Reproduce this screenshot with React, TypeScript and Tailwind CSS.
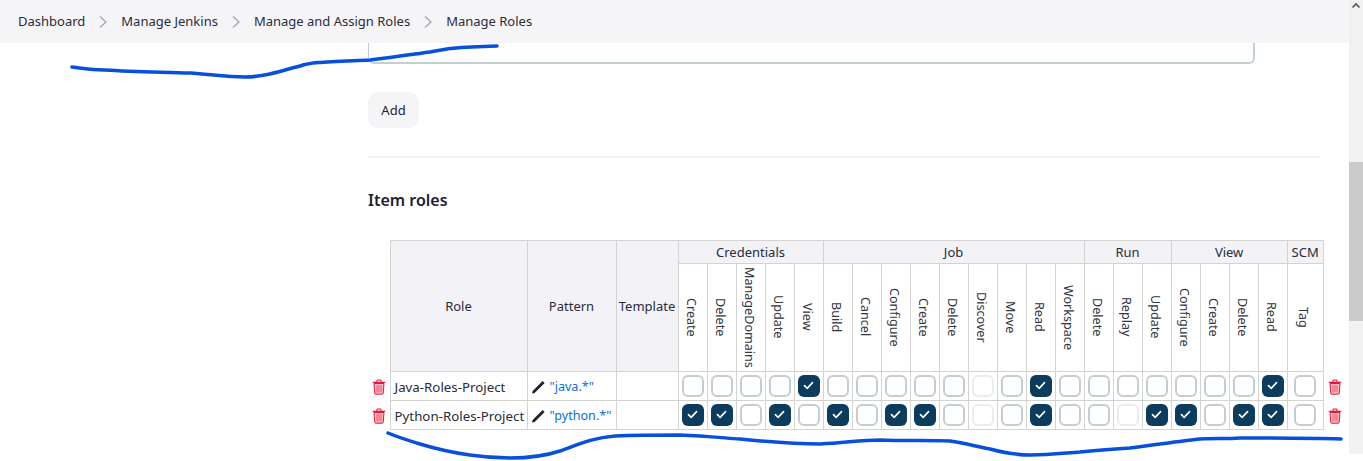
const crumbs = ["Dashboard", "Manage Jenkins", "Manage and Assign Roles", "Manage Roles"];

const groups = [
  { name: "Credentials", perms: ["Create", "Delete", "ManageDomains", "Update", "View"] },
  { name: "Job", perms: ["Build", "Cancel", "Configure", "Create", "Delete", "Discover", "Move", "Read", "Workspace"] },
  { name: "Run", perms: ["Delete", "Replay", "Update"] },
  { name: "View", perms: ["Configure", "Create", "Delete", "Read"] },
  { name: "SCM", perms: ["Tag"] },
];

const permCount = 22;

const roles = [
  { name: "Java-Roles-Project", pattern: '"java.*"', checked: [4, 12, 20], disabled: [10] },
  { name: "Python-Roles-Project", pattern: '"python.*"', checked: [0, 1, 3, 5, 7, 8, 12, 16, 17, 19, 20], disabled: [10, 15] },
];

const cell = "border border-[#d3d3cf] p-0 font-normal";

function Trash() {
  return (
    <svg width="14" height="16" viewBox="0 0 14 16" className="mx-auto block">
      <path d="M2 4.5h10l-.8 10a.8.8 0 0 1-.8.7H3.6a.8.8 0 0 1-.8-.7z" fill="#f9b9c2" stroke="#e6173c" strokeWidth="1" />
      <path d="M.8 3.4h12.4M5 3.2V1.5c0-.3.2-.5.5-.5h3c.3 0 .5.2.5.5v1.7" fill="none" stroke="#e6173c" strokeWidth="1.1" />
      <path d="M5 6.2v7M7 6.2v7M9 6.2v7" fill="none" stroke="#ea3a58" strokeWidth="0.8" />
    </svg>
  );
}

function Pencil() {
  return (
    <svg width="15" height="14" viewBox="0 0 15 14" className="shrink-0">
      <path d="M1 13.4 1.6 11 11.6 1l2 2-10 10z" fill="#1f2230" />
    </svg>
  );
}

function Box({ checked, disabled }: { checked: boolean; disabled: boolean }) {
  if (checked) {
    return (
      <div className="mx-auto flex h-[22px] w-[22px] items-center justify-center rounded-[6px] bg-[#0b3c5d]">
        <svg width="11" height="9" viewBox="0 0 12 10">
          <path d="M1.5 5.2 4.5 8.2 10.5 1.8" stroke="#fff" strokeWidth="1.8" fill="none" strokeLinecap="round" strokeLinejoin="round" />
        </svg>
      </div>
    );
  }
  return (
    <div
      className={`mx-auto h-[22px] w-[22px] rounded-[6px] border-2 ${
        disabled ? "border-[#e9edef]" : "border-[#c3ced2]"
      }`}
    />
  );
}

export default function App() {
  return (
    <div className="relative flex h-[461px] overflow-hidden bg-white font-['Noto_Sans',sans-serif] text-[13px] text-[#1f2230]">
      <div className="min-w-0 flex-1">
        {/* Breadcrumb bar */}
        <div className="flex h-[43px] items-center bg-[#f5f5f8] pl-[18px] text-[#2a2c38]">
          {crumbs.map((c, i) => (
            <div key={c} className="flex items-center">
              {i > 0 && (
                <svg width="36" height="14" viewBox="0 0 36 14">
                  <path d="M15 1.5 21 7 15 12.5" stroke="#a5a5ad" strokeWidth="1.3" fill="none" />
                </svg>
              )}
              <span>{c}</span>
            </div>
          ))}
        </div>

        <div className="pl-[368px] pr-[28px]">
          {/* Bottom of the global roles card */}
          <div className="mr-[66px] h-[21px] rounded-b-[6px] border-2 border-t-0 border-l-[1px] border-[#c3ced2]" />

          <button className="mt-[28px] block h-[36px] w-[51px] rounded-[10px] bg-[#f5f5f8] pt-[2px] text-[13px]">Add</button>

          <div className="mt-[28px] h-[2px] bg-[#f3f3f8]" />

          <h2 className="mt-[30px] h-[25px] text-[16px] leading-[25px] font-semibold">Item roles</h2>

          <table className="mt-[27px] w-[977px] table-fixed border-collapse text-center text-[#2a2c38]">
            <colgroup>
              <col className="w-[22px]" />
              <col className="w-[137px]" />
              <col className="w-[89px]" />
              <col className="w-[62px]" />
              {Array.from({ length: permCount - 1 }, (_, i) => (
                <col key={i} className="w-[29px]" />
              ))}
              <col className="w-[36px]" />
              <col className="w-[22px]" />
            </colgroup>
            <thead>
              <tr className="h-[22px] bg-[#f2f2f7]">
                <th rowSpan={2} className="bg-white p-0" />
                <th rowSpan={2} className={`${cell} pt-[2px]`}>Role</th>
                <th rowSpan={2} className={`${cell} pt-[2px]`}>Pattern</th>
                <th rowSpan={2} className={`${cell} pt-[2px]`}>Template</th>
                {groups.map((g) => (
                  <th key={g.name} colSpan={g.perms.length} className={`${cell} pt-[2px]`}>
                    {g.name}
                  </th>
                ))}
                <th rowSpan={2} className="bg-white p-0" />
              </tr>
              <tr className="h-[108px]">
                {groups.flatMap((g) =>
                  g.perms.map((p) => (
                    <th key={g.name + p} className={cell}>
                      <span className="inline-block pr-[4px] align-middle text-[12.6px] leading-[16px] text-[#33353f] [writing-mode:vertical-rl]">
                        {p}
                      </span>
                    </th>
                  )),
                )}
              </tr>
            </thead>
            <tbody>
              {roles.map((r) => (
                <tr key={r.name} className="h-[29px]">
                  <td className="p-0 pt-[2px]"><Trash /></td>
                  <td className={`${cell} whitespace-nowrap pt-[4px] pl-[4px] text-left text-[13.3px]`}>{r.name}</td>
                  <td className={`${cell} pt-[4px] text-left`}>
                    <div className="flex items-center gap-[3px] pl-[3px]">
                      <Pencil />
                      <a className="pl-[1px] text-[12.6px] text-[#0b6fd8]">{r.pattern}</a>
                    </div>
                  </td>
                  <td className={cell} />
                  {Array.from({ length: permCount }, (_, i) => (
                    <td key={i} className={cell}>
                      <Box checked={r.checked.includes(i)} disabled={r.disabled.includes(i)} />
                    </td>
                  ))}
                  <td className="p-0 pt-[2px] pl-[2px]"><Trash /></td>
                </tr>
              ))}
            </tbody>
          </table>
        </div>
      </div>

      {/* Scrollbar */}
      <div className="relative h-[454px] w-[14px] shrink-0 bg-[#f1f1f1]">
        <svg width="14" height="14" viewBox="0 0 14 14" className="absolute top-0 left-0">
          <path d="M3.5 7.5 7 4l3.5 3.5" stroke="#555" strokeWidth="1.6" fill="none" />
        </svg>
        <div className="absolute top-[162px] h-[159px] w-full bg-[#cbcbcb]" />
      </div>

      {/* Hand-drawn annotation strokes */}
      <svg className="pointer-events-none absolute inset-0" width="1363" height="461" viewBox="0 0 1363 461">
        <path
          d="M72 67 C85 69 95 70 105 70 C135 72 165 72 190 73 C215 75 230 77 245 77 C265 77 280 71 300 66 C312 62 325 62 370 60 C395 57 415 54 430 52 C445 49 455 47 497 46"
          fill="none"
          stroke="#0650dc"
          strokeWidth="3.5"
          strokeLinecap="round"
        />
        <path
          d="M388 433 C400 438 410 441 420 444 C440 450 455 453 470 455 C490 458 500 458 510 458 C530 458 545 456 560 451 C575 446 590 438 615 436 C640 435 660 435 680 435 C705 436 725 438 740 439 C770 442 800 444 820 444 C845 443 860 440 880 440 C905 441 930 440 950 441 C965 443 978 447 990 449 C1005 453 1018 455 1030 455 C1050 455 1065 453 1080 452 C1100 450 1115 449 1130 448 C1155 445 1180 441 1200 439 C1215 438 1225 439 1240 438 C1280 438 1310 438 1341 439"
          fill="none"
          stroke="#0650dc"
          strokeWidth="3.5"
          strokeLinecap="round"
        />
      </svg>
    </div>
  );
}
